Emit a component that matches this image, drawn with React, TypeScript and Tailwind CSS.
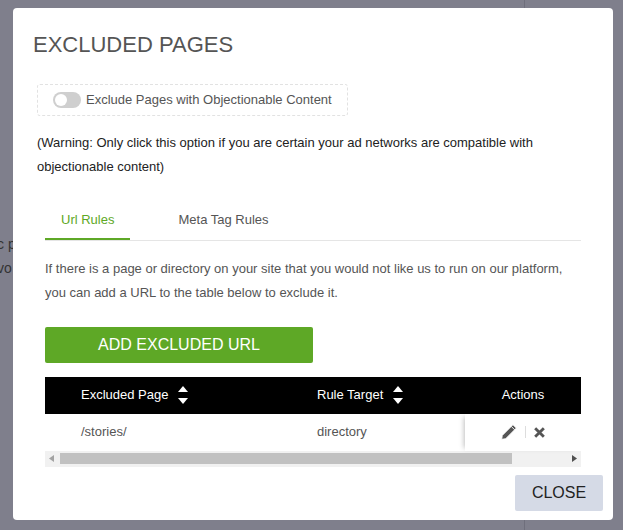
import React from "react";

const Sort = () => (
  <span className="ml-[10px] inline-flex flex-col gap-[6px]">
    <svg width="10" height="6" viewBox="0 0 10 6"><path d="M0 6 L5 0 L10 6 Z" fill="white" /></svg>
    <svg width="10" height="6" viewBox="0 0 10 6"><path d="M0 0 L5 6 L10 0 Z" fill="white" /></svg>
  </span>
);

export default function App() {
  return (
    <div className="relative h-[530px] w-[623px] overflow-hidden bg-[#7f7f8c]" style={{ fontFamily: '"Liberation Sans", Arial, sans-serif' }}>
      <div className="absolute left-[524px] top-0 h-full w-px bg-[#6f6f7c]" />
      <div className="absolute left-0 top-[232px] text-[14px] text-[#333] leading-[24px]">
        <div className="-ml-[3px]">c p</div>
        <div className="-ml-[3px]">vo</div>
      </div>
      <div className="absolute left-[13px] top-[8px] h-[512px] w-[600px] rounded-[4px] bg-white">
        <div className="px-[20px] pt-[24px] text-[22px] leading-[26px] text-[#555]">EXCLUDED PAGES</div>
        <div className="ml-[24px] mt-[26px] flex h-[32px] w-[311px] items-center rounded-[3px] border border-dashed border-[#e2e2e2] pl-[15px]">
          <span className="relative inline-block h-[16px] w-[28px] rounded-full bg-[#cfcfcf]">
            <span className="absolute left-[2px] top-[2px] h-[12px] w-[12px] rounded-full bg-white" />
          </span>
          <span className="ml-[5px] text-[13px] text-[#555]">Exclude Pages with Objectionable Content</span>
        </div>
        <p className="ml-[24px] mt-[15px] w-[520px] text-[13px] leading-[24px] text-[#222]">
          (Warning: Only click this option if you are certain your ad networks are compatible with objectionable content)
        </p>
        <div className="ml-[32px] mr-[32px] mt-[27px] flex border-b border-[#e5e5e5] text-[13px]">
          <div className="border-b-2 border-[#5ea826] px-[16px] pt-[4px] pb-[8px] text-[#5ea826]">Url Rules</div>
          <div className="ml-[32px] px-[16px] pt-[4px] pb-[8px] text-[#555]">Meta Tag Rules</div>
        </div>
        <p className="ml-[32px] mt-[16px] w-[530px] text-[13px] leading-[24px] text-[#555]">
          If there is a page or directory on your site that you would not like us to run on our platform, you can add a URL to the table below to exclude it.
        </p>
        <button className="ml-[32px] mt-[22px] h-[36px] w-[268px] rounded-[2px] bg-[#5ea826] text-[16px] text-white">ADD EXCLUDED URL</button>
        <div className="ml-[32px] mt-[14px] w-[536px] text-[13px]">
          <div className="flex h-[37px] items-center bg-black text-white">
            <div className="flex w-[272px] items-center pl-[36px]">Excluded Page<Sort /></div>
            <div className="flex w-[148px] items-center">Rule Target<Sort /></div>
            <div className="flex-1 text-center">Actions</div>
          </div>
          <div className="flex h-[37px] items-center text-[#555]">
            <div className="w-[272px] pl-[36px]">/stories/</div>
            <div className="w-[148px]">directory</div>
            <div className="flex h-full flex-1 items-center justify-center gap-[7px] shadow-[-4px_0_5px_-3px_rgba(0,0,0,0.25)]">
              <svg width="18" height="18" viewBox="0 0 16 16"><path d="M11.5 1.5 L14.5 4.5 L5 14 L1.5 14.5 L2 11 Z M10 3 L13 6" fill="#555" stroke="white" strokeWidth="0.8" /></svg>
              <span className="h-[12px] w-px bg-[#ddd]" />
              <svg width="13" height="13" viewBox="0 0 12 12"><path d="M2 2 L10 10 M10 2 L2 10" stroke="#555" strokeWidth="2.6" /></svg>
            </div>
          </div>
          <div className="flex h-[16px] items-center bg-[#f1f1f1]">
            <svg className="ml-[4px]" width="5" height="7" viewBox="0 0 5 7"><path d="M5 0 L0 3.5 L5 7 Z" fill="#a3a3a3" /></svg>
            <div className="ml-[6px] h-[11px] w-[452px] bg-[#c1c1c1]" />
            <svg className="ml-auto mr-[4px]" width="5" height="7" viewBox="0 0 5 7"><path d="M0 0 L5 3.5 L0 7 Z" fill="#505050" /></svg>
          </div>
        </div>
        <div className="mr-[10px] mt-[8px] flex justify-end">
          <button className="h-[36px] w-[88px] rounded-[2px] bg-[#d5dae6] text-[16px] text-[#222]">CLOSE</button>
        </div>
      </div>
    </div>
  );
}
